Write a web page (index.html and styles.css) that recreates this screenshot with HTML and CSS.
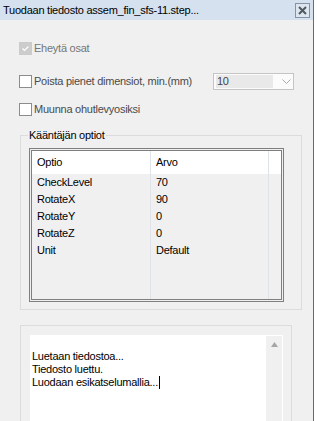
FILE: index.html
```html
<!DOCTYPE html>
<html>
<head>
<meta charset="utf-8">
<link rel="stylesheet" href="styles.css">
</head>
<body>
<div class="window">
  <div class="titlebar">
    <span class="title">Tuodaan tiedosto assem_fin_sfs-11.step...</span>
    <span class="close"><svg width="9" height="9" viewBox="0 0 9 9"><path d="M1 1L8 8M8 1L1 8" stroke="#505860" stroke-width="2" fill="none"/></svg></span>
  </div>
  <div class="options">
    <div class="row row1">
      <span class="cb checked"><svg width="11" height="11" viewBox="0 0 11 11"><path d="M2.5 5.5L4.5 7.5L8.5 3.5" stroke="#fff" stroke-width="1.2" fill="none"/></svg></span>
      <span class="lbl disabled">Eheytä osat</span>
    </div>
    <div class="row row2">
      <span class="cb"></span>
      <span class="lbl">Poista pienet dimensiot, min.(mm)</span>
      <span class="combo"><span class="combo-field">10</span><svg class="chev" width="9" height="5" viewBox="0 0 9 5"><path d="M0.5 0.5L4.5 4.5L8.5 0.5" stroke="#a8a8a8" stroke-width="1" fill="none"/></svg></span>
    </div>
    <div class="row row3">
      <span class="cb"></span>
      <span class="lbl">Muunna ohutlevyosiksi</span>
    </div>
  </div>
  <fieldset class="group group1">
    <legend>Kääntäjän optiot</legend>
    <div class="list">
      <div class="col c1">
        <div class="hd">Optio</div>
        <div class="cell">CheckLevel</div>
        <div class="cell">RotateX</div>
        <div class="cell">RotateY</div>
        <div class="cell">RotateZ</div>
        <div class="cell">Unit</div>
      </div>
      <div class="col c2">
        <div class="hd">Arvo</div>
        <div class="cell">70</div>
        <div class="cell">90</div>
        <div class="cell">0</div>
        <div class="cell">0</div>
        <div class="cell">Default</div>
      </div>
      <div class="col c3">
        <div class="hd"></div>
      </div>
    </div>
  </fieldset>
  <div class="group group2">
    <div class="log">
      <div class="log-text">
        <div>Luetaan tiedostoa...</div>
        <div>Tiedosto luettu.</div>
        <div>Luodaan esikatselumallia...<span class="caret"></span></div>
      </div>
      <div class="scroll"><svg width="7" height="5" viewBox="0 0 7 5"><path d="M0 5L3.5 0L7 5Z" fill="#a6a6a6"/></svg></div>
    </div>
  </div>
</div>
</body>
</html>
```

FILE: styles.css
```css
html, body {
  margin: 0;
  padding: 0;
  background: #ffffff;
}
.window {
  width: 313px;
  height: 421px;
  overflow: hidden;
  background: #f0f0f0;
  border-right: 1px solid #6b6b6b;
  font-family: "Liberation Sans", Arial, sans-serif;
  font-size: 11px;
  letter-spacing: -0.25px;
  line-height: 13px;
  color: #000;
}
.titlebar {
  height: 20px;
  display: flex;
  align-items: center;
  justify-content: space-between;
  padding: 0 3px 0 3px;
  background: #d5e1ee;
}
.title {
  color: #000;
}
.close {
  width: 13px;
  height: 13px;
  border: 1px solid #8393a6;
  background: #dde6f0;
  display: flex;
  align-items: center;
  justify-content: center;
}
.options {
  padding: 22px 19px 0 19px;
}
.row {
  display: flex;
  align-items: center;
}
.row2 {
  margin-top: 18px;
  height: 17px;
}
.row3 {
  margin-top: 13px;
}
.cb {
  width: 11px;
  height: 11px;
  border: 1px solid #8c8c8c;
  background: #fff;
  display: flex;
  align-items: center;
  justify-content: center;
  flex: none;
}
.cb.checked {
  border-color: #cbcbcb;
  background: #cccccc;
}
.lbl {
  margin-left: 2px;
  color: #4a4a4a;
}
.lbl.disabled {
  color: #767676;
}
.combo {
  margin-left: auto;
  width: 79px;
  height: 15px;
  border: 1px solid #c5c5c5;
  background: #fbfbfb;
  display: flex;
  align-items: center;
}
.combo-field {
  width: 56px;
  height: 13px;
  margin-left: 2px;
  padding-left: 1px;
  background: #e9e9e9;
  color: #444;
}
.chev {
  margin-left: 9px;
}
.group {
  margin: 0 0 0 20px;
  width: 272px;
  border: 1px solid #dcdcdc;
}
fieldset.group1 {
  margin-top: 13px;
  padding: 0 0 7px 8px;
  min-width: 0;
}
.group1 legend {
  margin-left: -1px;
  padding: 0 1px;
  line-height: 13px;
}
.list {
  margin-top: 6px;
  width: 249px;
  height: 148px;
  border: 3px double #7f7f7f;
  display: flex;
  background: #f0f0f0;
}
.col {
  display: flex;
  flex-direction: column;
}
.c1 {
  width: 118px;
  border-right: 1px solid #e0e4ea;
}
.c2 {
  width: 117px;
  border-right: 1px solid #e0e4ea;
}
.c3 {
  flex: 1;
}
.hd {
  height: 23px;
  line-height: 23px;
  background: #fff;
  padding-left: 5px;
}
.cell {
  height: 17px;
  line-height: 17px;
  padding-left: 5px;
}
.group2 {
  margin-top: 15px;
  height: 120px;
  padding: 9px 0 0 9px;
  box-sizing: border-box;
  border-bottom: none;
}
.log {
  width: 253px;
  height: 120px;
  background: #fff;
  display: flex;
}
.log-text {
  flex: 1;
  padding: 15px 0 0 2px;
}
.caret {
  display: inline-block;
  width: 1px;
  height: 13px;
  background: #000;
  vertical-align: top;
  margin-left: 1px;
}
.scroll {
  width: 16px;
  margin: 1px 1px 0 0;
  background: #f0f0f0;
  display: flex;
  justify-content: center;
  align-items: flex-start;
  padding-top: 6px;
  box-sizing: border-box;
}
```
